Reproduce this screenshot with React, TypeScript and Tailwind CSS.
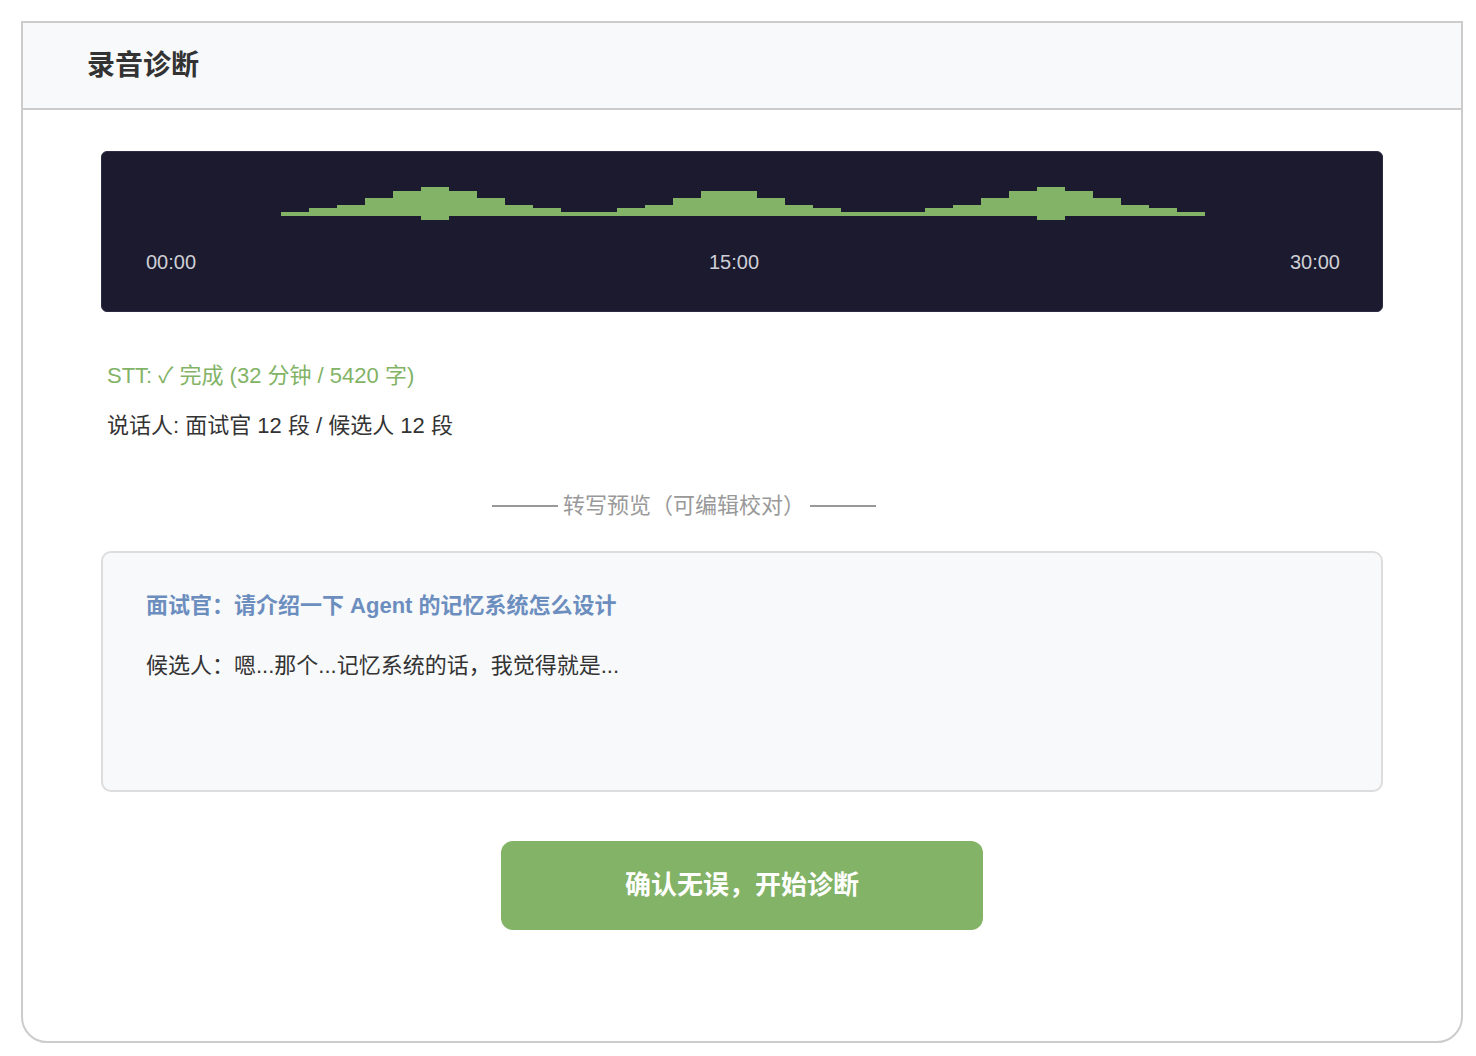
import React from 'react'

// bar levels across the waveform, 'P' is the playhead peak
const LEVELS: (number | 'P')[] = [
  1, 2, 3, 4, 5, 'P', 5, 4, 3, 2, 1,
  1, 2, 3, 4, 5, 5, 4, 3, 2, 1,
  1, 1, 2, 3, 4, 5, 'P', 5, 4, 3, 2, 1,
]

const TOPS: Record<number, number> = { 1: 25, 2: 21, 3: 18, 4: 11, 5: 4 }
const BAR_W = 28
const BASE = 29

function Waveform() {
  return (
    <svg width={LEVELS.length * BAR_W} height={34} viewBox={`0 0 ${LEVELS.length * BAR_W} 34`} className="block">
      {LEVELS.map((lv, i) => {
        const x = i * BAR_W
        if (lv === 'P') {
          return <rect key={i} x={x} y={0} width={BAR_W} height={33} fill="#82b366" />
        }
        const top = TOPS[lv]
        return <rect key={i} x={x} y={top} width={BAR_W} height={BASE - top} fill="#82b366" />
      })}
    </svg>
  )
}

export default function App() {
  const font = { fontFamily: '"Liberation Sans", "Noto Sans CJK SC", sans-serif' }

  return (
    <div className="min-h-screen bg-white p-[21px]" style={font}>
      <div className="w-[1442px] h-[1022px] border-2 border-[#cccccc] rounded-b-[26px] bg-white overflow-hidden">
        {/* Header */}
        <div className="h-[87px] bg-[#f8f9fa] border-b-2 border-[#cccccc] flex items-center pl-[64px]">
          <h1 className="text-[28px] font-bold text-[#333333] leading-none">录音诊断</h1>
        </div>

        <div className="px-[78px] pt-[41px]">
          {/* Waveform panel */}
          <div className="h-[161px] bg-[#1b1a2e] border border-[#2c2b45] rounded-[6px] flex flex-col">
            <div className="mt-[35px] ml-[179px]">
              <Waveform />
            </div>
            <div className="mt-[27px] pl-[44px] pr-[42px] flex justify-between text-[20px] leading-[28px] text-[#cfcfd6]">
              <span>00:00</span>
              <span className="mr-[18px]">15:00</span>
              <span>30:00</span>
            </div>
          </div>

          {/* Status */}
          <div className="mt-[49px] pl-[6px] text-[22px] leading-[30px]">
            <p className="text-[#82b366]">STT: ✓ 完成 (32 分钟 / 5420 字)</p>
            <p className="mt-[20px] text-[#333333]">说话人: 面试官 12 段 / 候选人 12 段</p>
          </div>

          {/* Divider */}
          <div className="mt-[50px] flex items-center justify-center pr-[116px] text-[22px] leading-[30px] text-[#999999]">
            <span className="w-[66px] h-[2px] bg-[#999999]" />
            <span className="mx-[5px]">转写预览（可编辑校对）</span>
            <span className="w-[66px] h-[2px] bg-[#999999]" />
          </div>

          {/* Transcript */}
          <div className="mt-[30px] h-[241px] bg-[#f8f9fa] border-2 border-[#dddddd] rounded-[10px] pt-[38px] pl-[43px] text-[22px] leading-[30px]">
            <p className="font-bold text-[#6c8ebf]">面试官：请介绍一下 Agent 的记忆系统怎么设计</p>
            <p className="mt-[30px] text-[#333333]">候选人：嗯...那个...记忆系统的话，我觉得就是...</p>
          </div>

          {/* Action */}
          <div className="mt-[49px] flex justify-center">
            <button className="w-[482px] h-[89px] bg-[#82b366] rounded-[12px] text-white text-[26px] font-bold">
              确认无误，开始诊断
            </button>
          </div>
        </div>
      </div>
    </div>
  )
}
